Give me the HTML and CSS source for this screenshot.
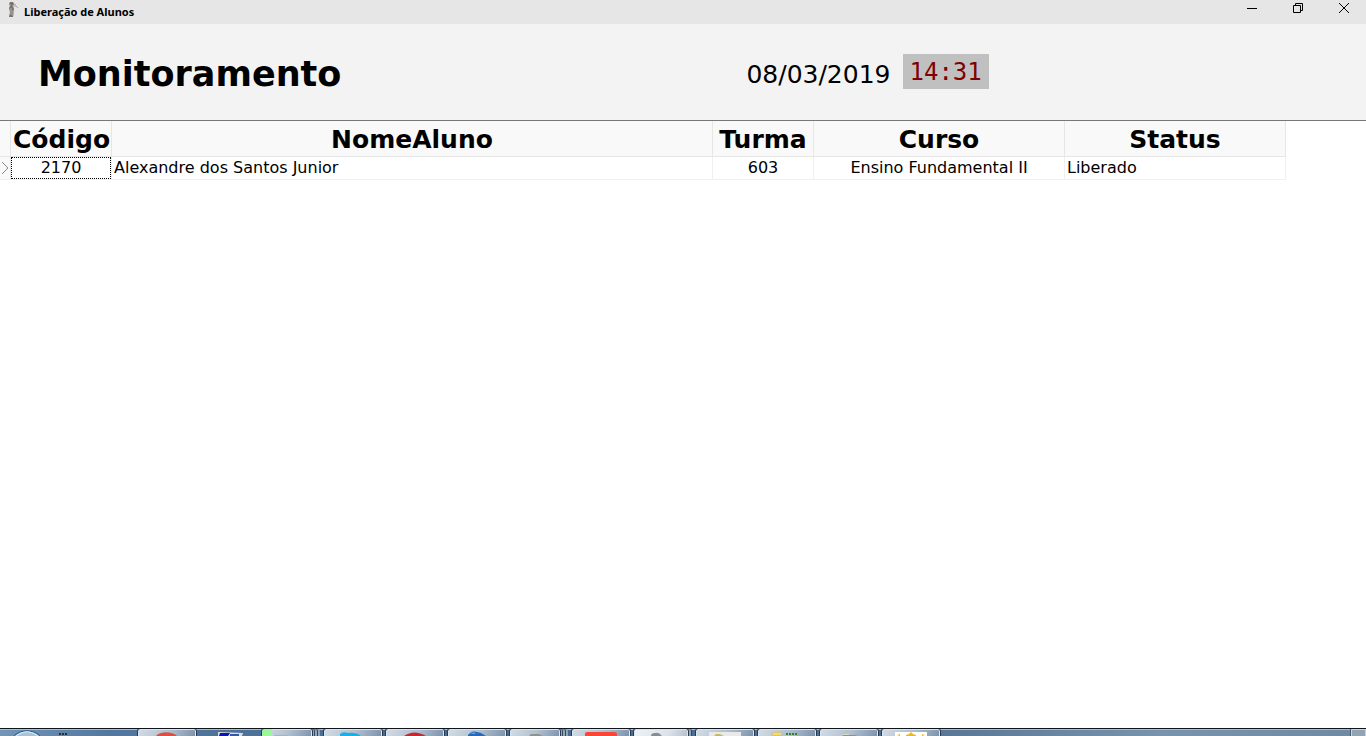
FILE: index.html
```
<!DOCTYPE html>
<html lang="pt-BR">
<head>
<meta charset="utf-8">
<title>Liberação de Alunos</title>
<link rel="stylesheet" href="styles.css">
</head>
<body>
<header class="titlebar">
  <svg class="app-icon" width="16" height="16" viewBox="0 0 16 16" aria-hidden="true">
    <path d="M4 0h3l1 2-1 2 1 3-1 8H3l1-5-1-4 1-2-1-2z" fill="#777270"/>
    <path d="M4 2v2M5 6v7M7 8v6" stroke="#b8b3b1" fill="none"/>
    <path d="M6 4l4 0 2 2M8 2l2 1" stroke="#aaa5a3" fill="none"/>
  </svg>
  <h2 class="window-title">Liberação de Alunos</h2>
  <div class="window-controls">
    <button type="button" class="window-button" aria-label="Minimizar"><svg width="12" height="12" viewBox="0 0 12 12"><path d="M1 6.500h10"/></svg></button>
    <button type="button" class="window-button" aria-label="Restaurar"><svg width="12" height="12" viewBox="0 0 12 12"><path d="M1.500 3.500h7v7h-7zM3.500 3.500v-2h7v7h-2"/></svg></button>
    <button type="button" class="window-button" aria-label="Fechar"><svg width="12" height="12" viewBox="0 0 12 12"><path d="M1 1l10 10M11 1L1 11"/></svg></button>
  </div>
</header>
<section class="banner">
  <h1 class="heading">Monitoramento</h1>
  <div class="now">
    <time class="date" datetime="2019-03-08">08/03/2019</time>
    <time class="clock" datetime="14:31">14:31</time>
  </div>
</section>
<main class="content">
  <table class="grid">
    <colgroup><col class="col-mark"><col class="col-code"><col class="col-name"><col class="col-code"><col class="col-course"><col class="col-status"></colgroup>
    <thead>
      <tr><td class="mark"></td><th scope="col">Código</th><th scope="col">NomeAluno</th><th scope="col">Turma</th><th scope="col">Curso</th><th scope="col">Status</th></tr>
    </thead>
    <tbody>
      <tr>
        <td class="mark"><svg class="chevron" width="10" height="14" viewBox="0 0 10 14" aria-hidden="true"><path d="M2 1l6 6-6 6" fill="none" stroke="#8a8a8a"/></svg></td>
        <td class="center selected"><span class="focus">2170</span></td><td>Alexandre dos Santos Junior</td><td class="center">603</td><td class="center">Ensino Fundamental II</td><td>Liberado</td>
      </tr>
    </tbody>
  </table>
</main>
<footer class="taskbar">
  <button type="button" class="start" aria-label="Iniciar"><svg width="138" height="7" viewBox="0 0 138 7"><path d="M13 8C20 0 34 0 41 8z" fill="#a9c4d6"/><path d="M13 8C20 0 34 0 41 8" fill="none" stroke="#174e7d"/><path d="M15 8C22 1 32 1 39 8" fill="none" stroke="#e6f3fa"/><path d="M59 5h2M62 5h2M65 5h2" stroke="#25303c" stroke-width="2"/></svg></button>
  <nav class="tasks" aria-label="Programas abertos">
    <button type="button" class="task" aria-label="Navegador"><svg width="58" height="7" viewBox="0 0 58 7"><path d="M18 7C22 2 34 2 39 7z" fill="#df4f40"/></svg></button>
    <button type="button" class="task plain" aria-label="Área de trabalho"><svg width="58" height="7" viewBox="0 0 58 7"><path d="M18 3l25 1-1 3H18z" fill="#d9dde0"/><path d="M20 4h10l-2 3h-9z" fill="#0b14b5"/><path d="M30 5h9v2h-9z" fill="#3b579a"/></svg></button>
    <button type="button" class="task stacked" aria-label="Arquivos"><svg width="50" height="7" viewBox="0 0 50 7"><path d="M0 0h10v7H0z" fill="#9cf79b"/><path d="M12 6h14v1H12z" fill="#c9b07b"/></svg></button>
    <button type="button" class="task" aria-label="Mensagens"><svg width="58" height="7" viewBox="0 0 58 7"><path d="M16 7V5q3-3 8-1 8-1 13 3z" fill="#16b1ea"/></svg></button>
    <button type="button" class="task" aria-label="Aplicativo vermelho"><svg width="58" height="7" viewBox="0 0 58 7"><path d="M18 7Q28 0 40 7z" fill="#cc2530"/></svg></button>
    <button type="button" class="task" aria-label="Aplicativo azul"><svg width="58" height="7" viewBox="0 0 58 7"><path d="M20 6q4-5 9-3l4 1 5 3H20z" fill="#2668bd"/><path d="M22 5l4-2 2 2z" fill="#56a6e6"/></svg></button>
    <button type="button" class="task stacked" aria-label="Ferramentas"><svg width="50" height="7" viewBox="0 0 50 7"><path d="M19 7l2-2h8l4 2z" fill="#8c958c"/></svg></button>
    <button type="button" class="task" aria-label="Documento"><svg width="58" height="7" viewBox="0 0 58 7"><path d="M13 7V5q0-2 2-2h27q3 0 3 2v2z" fill="#fa4637"/></svg></button>
    <button type="button" class="task active stacked single" aria-label="Liberação de Alunos"><svg width="54" height="7" viewBox="0 0 54 7"><path d="M17 7q0-3 4-3 4-1 7 3z" fill="#8c8b90"/></svg></button>
    <button type="button" class="task" aria-label="Pasta"><svg width="58" height="7" viewBox="0 0 58 7"><path d="M13 3h32v4H13z" fill="#e8e9e8"/><path d="M18 7l2-2h4l4 2z" fill="#cfb75c"/></svg></button>
    <button type="button" class="task" aria-label="Banco de dados"><svg width="58" height="7" viewBox="0 0 58 7"><path d="M14 7V4q5-2 10 0v3z" fill="#e4c45a"/><path d="M15 5h8" stroke="#fff2a3"/><path d="M28 5h11" stroke="#397e36" stroke-width="2" stroke-dasharray="2 1"/></svg></button>
    <button type="button" class="task" aria-label="Editor"><svg width="58" height="7" viewBox="0 0 58 7"><path d="M23 6l12 0 3 1H23z" fill="#8e9090"/><path d="M23 5h6v1h-6z" fill="#dedac9"/></svg></button>
    <button type="button" class="task" aria-label="Escola"><svg width="58" height="7" viewBox="0 0 58 7"><path d="M13 3h32v4H13z" fill="#fff"/><path d="M24 7v-1l3-1 2-2 2 2 3 1v1zM15 6l3-1v2zM40 5l3 1-3 1z" fill="#e9b927"/></svg></button>
  </nav>
  <button type="button" class="show-desktop" aria-label="Mostrar área de trabalho"></button>
</footer>
</body>
</html>
```
FILE: styles.css
```
* { box-sizing: border-box; }

body {
  margin: 0;
  height: 100vh;
  display: flex;
  flex-direction: column;
  overflow: hidden;
  background: #fff;
  color: #000;
  font-family: Verdana, "DejaVu Sans", sans-serif;
}

button {
  padding: 0;
  border: 0;
  background: none;
}

svg { display: block; }

.titlebar {
  display: flex;
  align-items: center;
  height: 24px;
  flex: none;
  padding-left: 6px;
  background: #e6e6e6;
}

.app-icon { margin-bottom: 4px; }

.window-title {
  margin: 0 auto 0 2px;
  font: bold 11px/24px "Noto Sans", "Open Sans", sans-serif;
}

.window-controls {
  display: flex;
  align-self: flex-start;
}

.window-button {
  display: flex;
  justify-content: center;
  align-items: center;
  width: 46px;
  height: 16px;
  padding-left: 2px;
}

.window-button svg {
  fill: none;
  stroke: #000;
}

.banner {
  display: flex;
  align-items: center;
  height: 97px;
  flex: none;
  padding: 0 40px 2px 38px;
  border-bottom: 1px solid #777;
  background: #f3f3f3;
}

.heading {
  flex: 0 0 55%;
  margin: 0;
  padding-top: 6px;
  font-size: 35px;
  line-height: 44px;
}

.now {
  display: flex;
  align-items: center;
  gap: 13px;
}

.date {
  padding-top: 8px;
  font-size: 25px;
  line-height: 30px;
}

.clock {
  padding: 2px 7px 0 6px;
  background: #c0c0c0;
  color: #800000;
  font-family: "DejaVu Sans Mono", monospace;
  font-size: 24px;
  line-height: 33px;
}

.content { flex: 1; }

.grid {
  table-layout: fixed;
  width: 1286px;
  border-collapse: separate;
  border-spacing: 0;
}

.col-mark { width: 11px; }
.col-code { width: 101px; }
.col-name { width: 601px; }
.col-course { width: 251px; }
.col-status { width: 221px; }

.grid th,
.grid td {
  padding: 0 2px;
  border-right: 1px solid #f0f0f0;
  border-bottom: 1px solid #f0f0f0;
  white-space: nowrap;
}

.grid th,
.grid thead td {
  height: 36px;
  padding-top: 2px;
  border-color: #e6e6e6;
  background: #f9f9f9;
  font-size: 25px;
  line-height: 33px;
}

.grid tbody td {
  height: 23px;
  font-size: 16px;
  line-height: 22px;
}

.grid .mark {
  padding: 0;
  border-right-color: #e6e6e6;
  background: #f9f9f9;
}

.grid .center { text-align: center; }

.grid .selected { padding: 0; }

.focus {
  display: block;
  outline: 1px dotted #000;
  outline-offset: -1px;
}

.taskbar {
  display: flex;
  height: 8px;
  flex: none;
  overflow: hidden;
  border-top: 1px solid #10151c;
  background: linear-gradient(to right, #7395b6 0, #53779e 8%, #476a90 30%, #526f91 65%, #7893ad 85%, #7089a3 100%);
  box-shadow: inset 0 1px #a8bfd4;
}

.start { width: 138px; height: 7px; }

.tasks {
  display: flex;
  gap: 4px;
  flex: 1;
}

.task {
  width: 58px;
  height: 12px;
  border: solid #dce5ec;
  border-width: 1px 1px 0;
  border-radius: 2px 2px 0 0;
  outline: 1px solid #293b50;
  background: linear-gradient(120deg, #d2dbe4, #b1c0cf 50%, #788fa9);
}

.task svg { margin: -1px; }

.task:not(.plain) { display: flex; align-items: flex-start; }

.task.plain {
  display: flex;
  border-color: transparent;
  outline: 0;
  background: none;
}

.task.stacked {
  width: 50px;
  margin-right: 8px;
  box-shadow: 2px 0 #91a5b9, 3px 0 #34495f, 5px 0 #91a5b9, 6px 0 #34495f, 8px 0 #91a5b9;
}

.task.single {
  width: 54px;
  margin-right: 4px;
  box-shadow: 3px 0 #91a5b9, 4px 0 #34495f;
}

.task.active { background: linear-gradient(120deg, #eef2f6, #dce3ea 60%, #afbdcb); }

.show-desktop {
  width: 15px;
  height: 12px;
  border: 1px solid #c8d3dd;
  outline: 1px solid #465b70;
  background: #92a3b1;
}
```
